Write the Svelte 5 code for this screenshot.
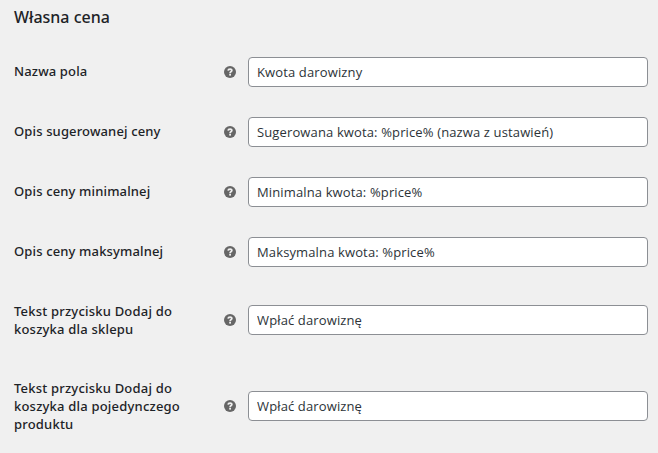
<script lang="ts">
  let fields = $state([
    { id: 'name', lines: ['Nazwa pola'], value: 'Kwota darowizny' },
    { id: 'suggested', lines: ['Opis sugerowanej ceny'], value: 'Sugerowana kwota: %price% (nazwa z ustawień)' },
    { id: 'minimum', lines: ['Opis ceny minimalnej'], value: 'Minimalna kwota: %price%' },
    { id: 'maximum', lines: ['Opis ceny maksymalnej'], value: 'Maksymalna kwota: %price%' },
    { id: 'shop', lines: ['Tekst przycisku Dodaj do', 'koszyka dla sklepu'], value: 'Wpłać darowiznę' },
    { id: 'single', lines: ['Tekst przycisku Dodaj do', 'koszyka dla pojedynczego', 'produktu'], value: 'Wpłać darowiznę' },
  ]);
</script>

<form class="settings">
  <h2>Własna cena</h2>

  {#each fields as field (field.id)}
    <div class="row" class:multiline={field.lines.length > 1}>
      <label for={field.id}>
        {#each field.lines as line}
          <span class="line">{line}</span>
        {/each}
      </label>
      <svg class="help" viewBox="0 0 12 12" aria-hidden="true">
        <circle cx="6" cy="6" r="6" fill="#666" />
        <path d="M4.1 4.7C4.3 2.6 8 2.6 7.8 4.6C7.7 5.7 6.1 5.7 6.1 7.2" fill="none" stroke="#f0f0f0" stroke-width="1.8" />
        <rect x="5.2" y="7.9" width="1.8" height="1.7" fill="#f0f0f0" />
      </svg>
      <input id={field.id} type="text" bind:value={field.value} />
    </div>
  {/each}
</form>

<style>
  :global(body) {
    background: #f0f0f0;
  }

  .settings {
    padding: 7px 10px 0 14px;
    font-family: 'Noto Sans', 'Open Sans', sans-serif;
    color: #1d2327;
  }

  h2 {
    margin: 0 0 15px;
    font-size: 16px;
    font-weight: 500;
    line-height: 20px;
  }

  .row {
    display: grid;
    grid-template-columns: 210px 12px 400px;
    column-gap: 6px;
    align-items: center;
    min-height: 60px;
  }

  .row.multiline {
    padding: 20px 0;
    min-height: 36px;
  }

  .row:last-child {
    padding: 21px 0;
  }

  label {
    padding-bottom: 2px;
    font-size: 13px;
    font-weight: 500;
    line-height: 18px;
    letter-spacing: 0.14px;
  }

  .multiline label {
    padding-bottom: 0;
    letter-spacing: 0.2px;
  }

  .line {
    display: block;
    white-space: nowrap;
  }

  .help {
    width: 12px;
    height: 12px;
    margin-left: -6px;
  }

  .row:not(.multiline) .help {
    margin-bottom: 1px;
  }

  input {
    box-sizing: border-box;
    width: 100%;
    height: 30px;
    margin: 0;
    padding: 0 8px;
    border: 1px solid #8c8f94;
    border-radius: 4px;
    background: #fff;
    color: #2c3338;
    font-family: 'Open Sans', sans-serif;
    font-size: 13px;
    letter-spacing: 0.13px;
  }
</style>
